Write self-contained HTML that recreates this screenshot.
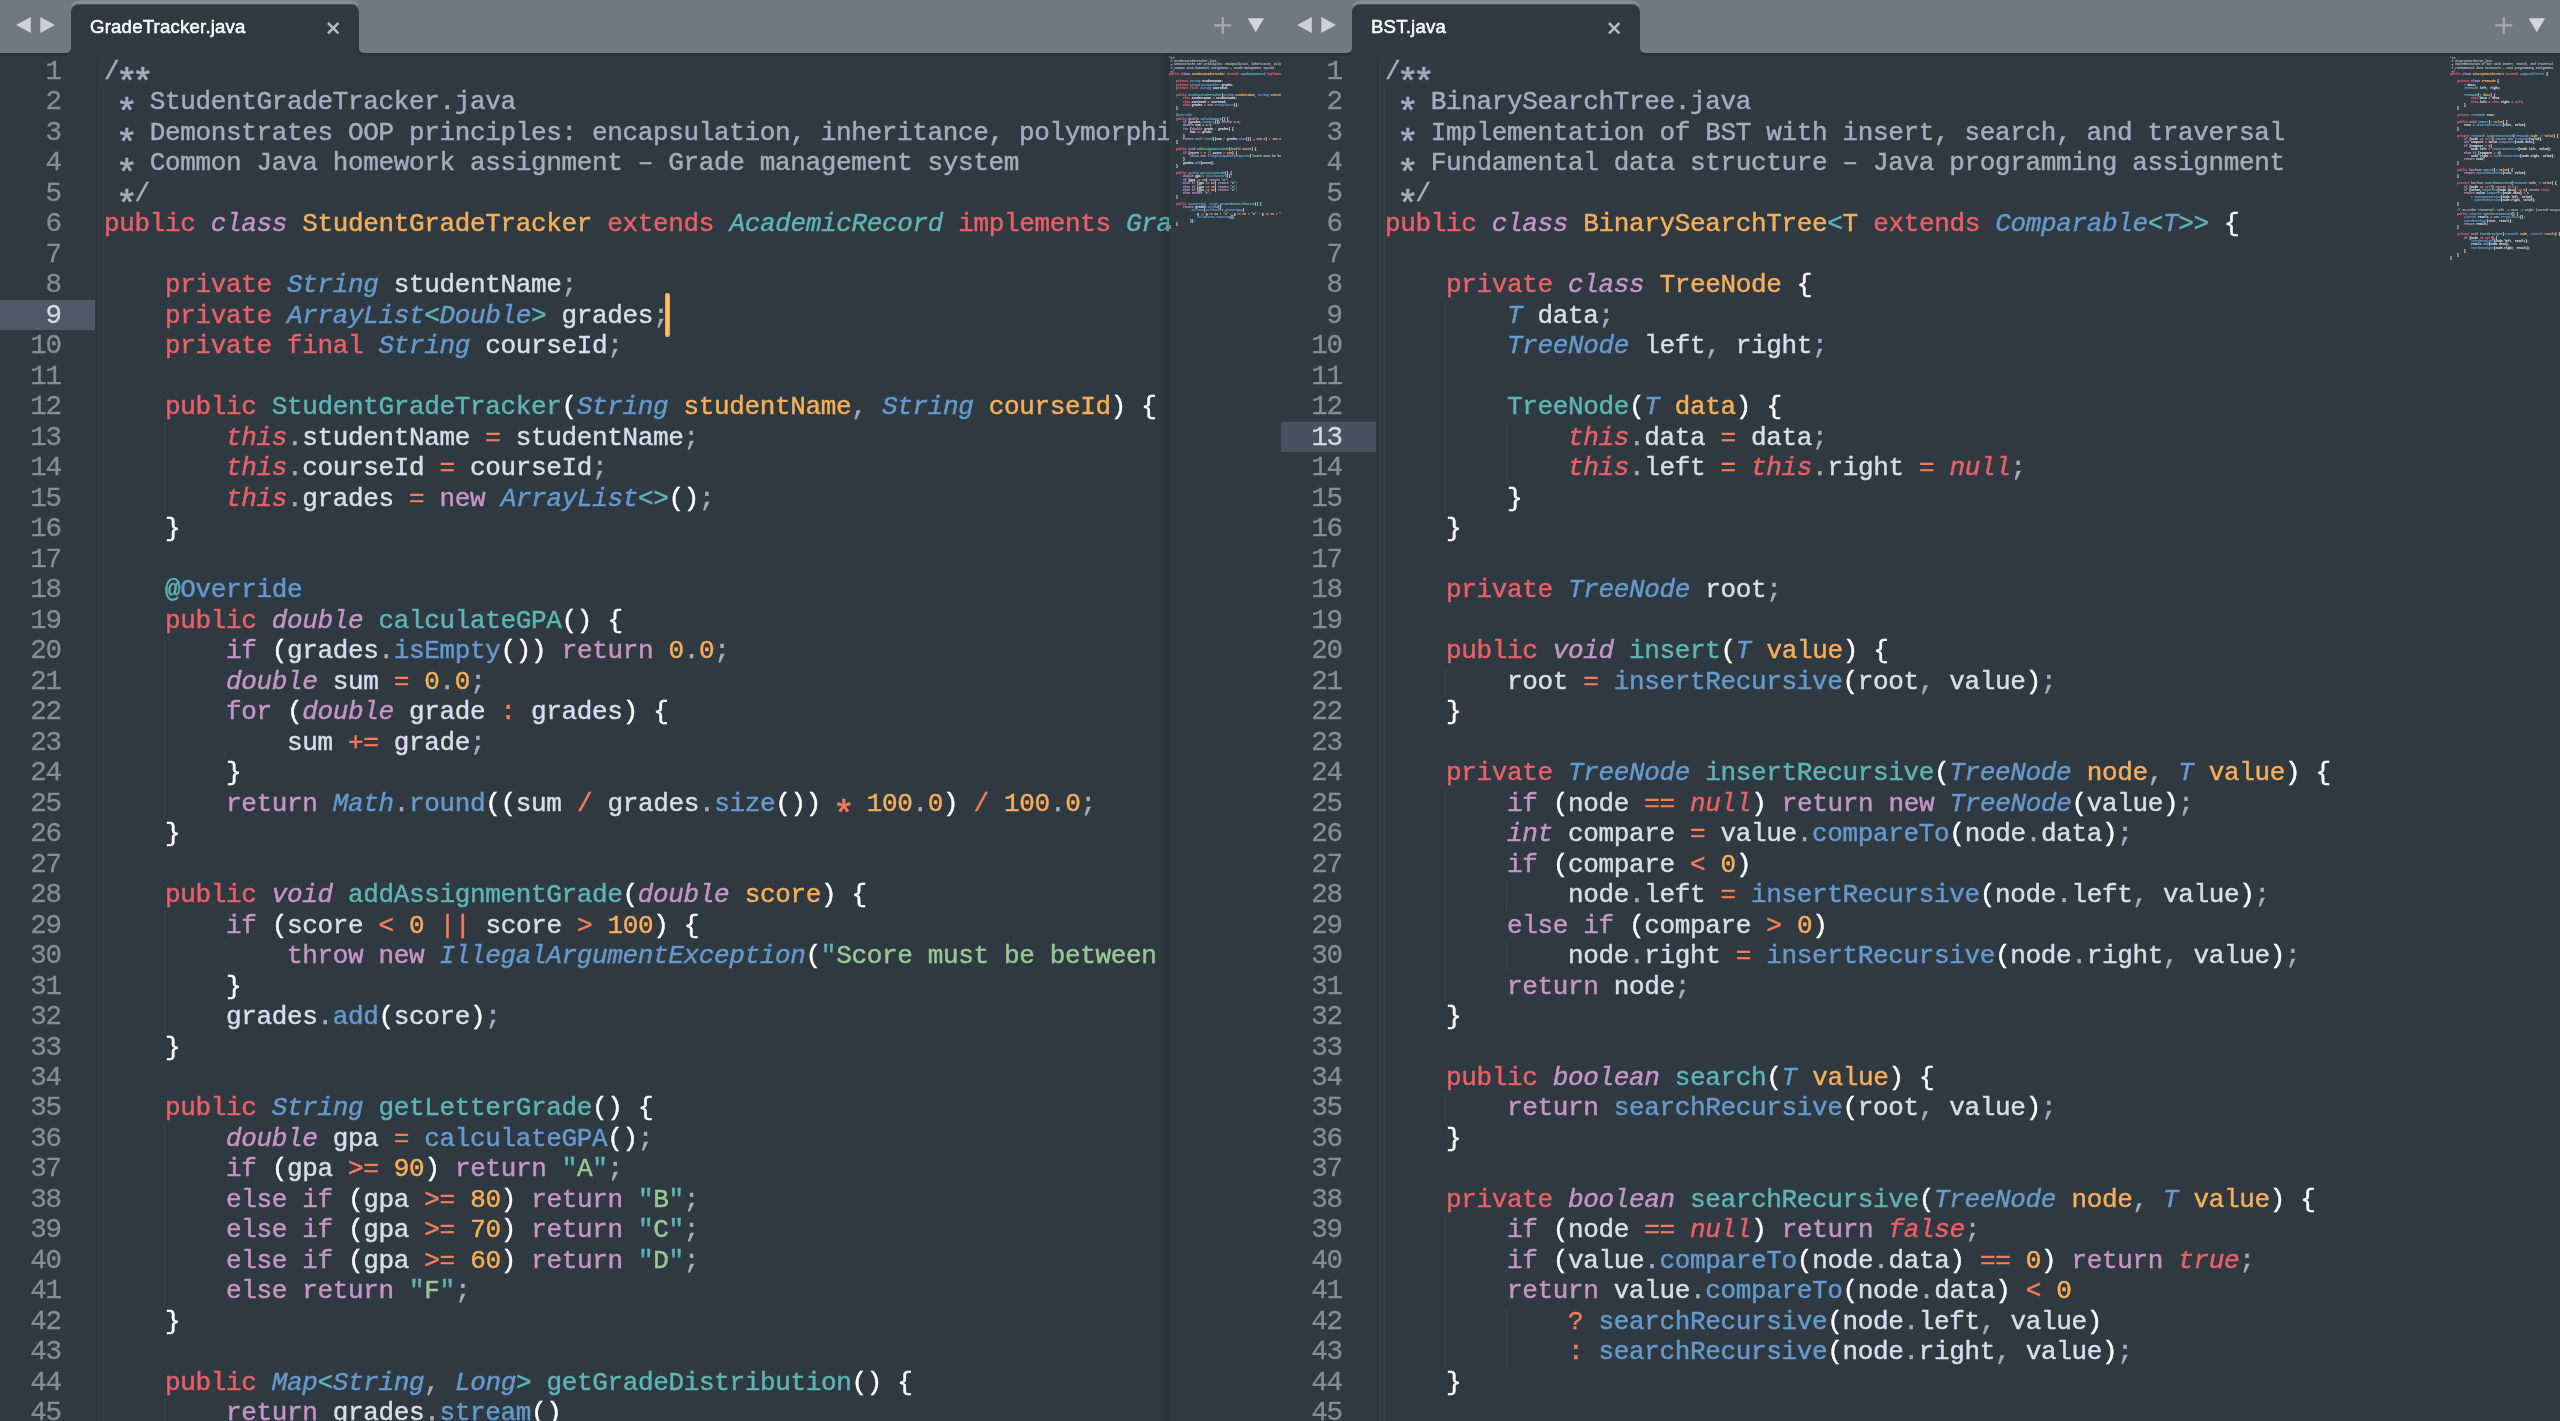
<!DOCTYPE html>
<html><head><meta charset="utf-8"><title>Sublime</title><style>
html,body{margin:0;padding:0}
body{width:2560px;height:1421px;overflow:hidden;position:relative;background:#2f3942;font-family:"Liberation Sans",sans-serif}
.pane{position:absolute;top:0;height:1421px;width:1281px;overflow:hidden;background:#2f3942}
.code,.gut,.title,.mm{will-change:transform}
.bar{position:absolute;left:0;top:0;width:100%;height:52.6px;background:#707880}
.barline{position:absolute;left:0;top:52.6px;width:100%;height:3px;background:linear-gradient(rgba(24,30,40,0.38),rgba(24,30,40,0))}
.tab{position:absolute;left:71px;top:3.5px;width:288px;height:53px;background:#2f3942;border-radius:8px 8px 0 0;box-shadow:inset 0 1px 0 #4a545f,0 -3.5px 0 #848c96}
.tab:before,.tab:after{content:"";position:absolute;bottom:3.9px;width:5px;height:5px}
.tab:before{left:-5px;background:radial-gradient(circle at 0 0,rgba(47,57,66,0) 4.5px,#2f3942 5.5px)}
.tab:after{right:-5px;background:radial-gradient(circle at 100% 0,rgba(47,57,66,0) 4.5px,#2f3942 5.5px)}
.title{position:absolute;left:19px;top:11px;font-size:18.6px;letter-spacing:0.2px;line-height:24px;color:#fff;white-space:nowrap;-webkit-text-stroke:0.5px #fff}
.ico{position:absolute;left:0;top:0}
.gut{position:absolute;left:0;top:56.92px;width:60.7px;text-align:right;white-space:pre;font-family:"Liberation Mono",monospace;font-size:27.5px;letter-spacing:-1.2527px;line-height:30.49px;color:#848c96;margin:0;-webkit-text-stroke:0.3px}
.gut b{font-weight:normal;color:#d3d9e1}
.hl{position:absolute;left:0;width:95px;height:30px;background:#4f5a66}
.code{position:absolute;left:103.8px;top:57.32px;margin:0;white-space:pre;font-family:"Liberation Mono",monospace;font-size:26.0px;letter-spacing:-0.3525px;line-height:30.49px;color:#d8dee9;-webkit-text-stroke:0.45px}
.clip{position:absolute;left:0;top:52px;width:1168.7px;height:1369px;overflow:hidden}
i{font-style:normal}
.a{display:inline-block;transform:translateY(10.3px) scale(1.42);transform-origin:50% 38%}
.c,.s{color:#a6acb9}
.k,.ki{color:#ec5f66}
.p,.pi{color:#c695c6}
.o{color:#f9ae58}
.b,.bi{color:#6699cc}
.t,.ti{color:#5fb4b4}
.x{color:#f97b58}
.g{color:#99c794}
.w{color:#ffffff}
.ki,.pi,.bi,.ti{font-style:italic}
.guide{position:absolute;width:1.5px;background:rgba(216,222,233,0.05)}
.guide.g0{background:rgba(216,222,233,0.06)}
.mm{position:absolute;left:1168.6px;top:55.6px;transform-origin:0 0;transform:scale(0.1148,0.1115);margin:0;white-space:pre;font-family:"Liberation Mono",monospace;font-size:26.0px;letter-spacing:-0.3525px;line-height:30.49px;color:#d8dee9;font-weight:bold;-webkit-text-stroke:1.2px;opacity:0.88}
.mmshadow{position:absolute;left:1160px;top:52px;width:10px;height:1369px;background:linear-gradient(90deg,rgba(0,0,0,0),rgba(0,0,0,0.10) 75%,rgba(0,0,0,0.03))}
.caret{position:absolute;left:665.2px;top:292.8px;width:4.6px;height:44.4px;background:linear-gradient(90deg,#e9993f,#fdc27c 40%,#fdc27c 60%,#e9993f);border-radius:2.3px}
</style></head><body>
<div class="pane" style="left:0px">
<div class="hl" style="top:300.02px;background:#4f5965"></div>
<pre class="gut">1
2
3
4
5
6
7
8
<b>9</b>
10
11
12
13
14
15
16
17
18
19
20
21
22
23
24
25
26
27
28
29
30
31
32
33
34
35
36
37
38
39
40
41
42
43
44
45
46</pre>
<div class="clip" style="top:0;height:1421px"><div class="guide g0" style="left:102.8px;width:1.6px;top:87.59px;height:1400px"></div><div style="position:absolute;left:96.2px;width:1px;top:52px;height:1400px;background:rgba(0,0,0,0.08)"></div><div class="guide" style="left:163.90px;top:422.98px;height:91.47px"></div><div class="guide" style="left:163.90px;top:636.41px;height:182.94px"></div><div class="guide" style="left:163.90px;top:910.82px;height:121.96px"></div><div class="guide" style="left:163.90px;top:1124.25px;height:182.94px"></div><div class="guide" style="left:163.90px;top:1398.66px;height:60.98px"></div><div class="guide" style="left:224.90px;top:727.88px;height:30.49px"></div><div class="guide" style="left:224.90px;top:941.31px;height:30.49px"></div><div class="guide" style="left:224.90px;top:1429.15px;height:30.49px"></div><pre class="code" style="top:57.32px"><i class="c">/<i class="a">*</i><i class="a">*</i></i>
<i class="c"> <i class="a">*</i> StudentGradeTracker.java</i>
<i class="c"> <i class="a">*</i> Demonstrates OOP principles: encapsulation, inheritance, polymorphism</i>
<i class="c"> <i class="a">*</i> Common Java homework assignment – Grade management system</i>
<i class="c"> <i class="a">*</i>/</i>
<i class="k">public</i> <i class="pi">class</i> <i class="o">StudentGradeTracker</i> <i class="k">extends</i> <i class="ti">AcademicRecord</i> <i class="k">implements</i> <i class="ti">GradeCalculator</i> <i class="w">{</i>

    <i class="k">private</i> <i class="bi">String</i> studentName<i class="s">;</i>
    <i class="k">private</i> <i class="bi">ArrayList</i><i class="t">&lt;</i><i class="bi">Double</i><i class="t">&gt;</i> grades<i class="s">;</i>
    <i class="k">private</i> <i class="k">final</i> <i class="bi">String</i> courseId<i class="s">;</i>

    <i class="k">public</i> <i class="t">StudentGradeTracker</i><i class="w">(</i><i class="bi">String</i> <i class="o">studentName</i><i class="s">,</i> <i class="bi">String</i> <i class="o">courseId</i><i class="w">)</i> <i class="w">{</i>
        <i class="ki">this</i><i class="s">.</i>studentName <i class="x">=</i> studentName<i class="s">;</i>
        <i class="ki">this</i><i class="s">.</i>courseId <i class="x">=</i> courseId<i class="s">;</i>
        <i class="ki">this</i><i class="s">.</i>grades <i class="x">=</i> <i class="p">new</i> <i class="bi">ArrayList</i><i class="t">&lt;&gt;</i><i class="w">()</i><i class="s">;</i>
    <i class="w">}</i>

    <i class="t">@</i><i class="b">Override</i>
    <i class="k">public</i> <i class="pi">double</i> <i class="t">calculateGPA</i><i class="w">()</i> <i class="w">{</i>
        <i class="p">if</i> <i class="w">(</i>grades<i class="s">.</i><i class="b">isEmpty</i><i class="w">())</i> <i class="p">return</i> <i class="o">0</i><i class="s">.</i><i class="o">0</i><i class="s">;</i>
        <i class="pi">double</i> sum <i class="x">=</i> <i class="o">0</i><i class="s">.</i><i class="o">0</i><i class="s">;</i>
        <i class="p">for</i> <i class="w">(</i><i class="pi">double</i> grade <i class="x">:</i> grades<i class="w">)</i> <i class="w">{</i>
            sum <i class="x">+=</i> grade<i class="s">;</i>
        <i class="w">}</i>
        <i class="p">return</i> <i class="bi">Math</i><i class="s">.</i><i class="b">round</i><i class="w">((</i>sum <i class="x">/</i> grades<i class="s">.</i><i class="b">size</i><i class="w">())</i> <i class="x"><i class="a">*</i></i> <i class="o">100</i><i class="s">.</i><i class="o">0</i><i class="w">)</i> <i class="x">/</i> <i class="o">100</i><i class="s">.</i><i class="o">0</i><i class="s">;</i>
    <i class="w">}</i>

    <i class="k">public</i> <i class="pi">void</i> <i class="t">addAssignmentGrade</i><i class="w">(</i><i class="pi">double</i> <i class="o">score</i><i class="w">)</i> <i class="w">{</i>
        <i class="p">if</i> <i class="w">(</i>score <i class="x">&lt;</i> <i class="o">0</i> <i class="x">||</i> score <i class="x">&gt;</i> <i class="o">100</i><i class="w">)</i> <i class="w">{</i>
            <i class="p">throw</i> <i class="p">new</i> <i class="bi">IllegalArgumentException</i><i class="w">(</i><i class="t">"</i><i class="g">Score must be between 0 and 100</i><i class="t">"</i><i class="w">)</i><i class="s">;</i>
        <i class="w">}</i>
        grades<i class="s">.</i><i class="b">add</i><i class="w">(</i>score<i class="w">)</i><i class="s">;</i>
    <i class="w">}</i>

    <i class="k">public</i> <i class="bi">String</i> <i class="t">getLetterGrade</i><i class="w">()</i> <i class="w">{</i>
        <i class="pi">double</i> gpa <i class="x">=</i> <i class="b">calculateGPA</i><i class="w">()</i><i class="s">;</i>
        <i class="p">if</i> <i class="w">(</i>gpa <i class="x">&gt;=</i> <i class="o">90</i><i class="w">)</i> <i class="p">return</i> <i class="t">"</i><i class="g">A</i><i class="t">"</i><i class="s">;</i>
        <i class="p">else</i> <i class="p">if</i> <i class="w">(</i>gpa <i class="x">&gt;=</i> <i class="o">80</i><i class="w">)</i> <i class="p">return</i> <i class="t">"</i><i class="g">B</i><i class="t">"</i><i class="s">;</i>
        <i class="p">else</i> <i class="p">if</i> <i class="w">(</i>gpa <i class="x">&gt;=</i> <i class="o">70</i><i class="w">)</i> <i class="p">return</i> <i class="t">"</i><i class="g">C</i><i class="t">"</i><i class="s">;</i>
        <i class="p">else</i> <i class="p">if</i> <i class="w">(</i>gpa <i class="x">&gt;=</i> <i class="o">60</i><i class="w">)</i> <i class="p">return</i> <i class="t">"</i><i class="g">D</i><i class="t">"</i><i class="s">;</i>
        <i class="p">else</i> <i class="p">return</i> <i class="t">"</i><i class="g">F</i><i class="t">"</i><i class="s">;</i>
    <i class="w">}</i>

    <i class="k">public</i> <i class="bi">Map</i><i class="t">&lt;</i><i class="bi">String</i><i class="s">,</i> <i class="bi">Long</i><i class="t">&gt;</i> <i class="t">getGradeDistribution</i><i class="w">()</i> <i class="w">{</i>
        <i class="p">return</i> grades<i class="s">.</i><i class="b">stream</i><i class="w">()</i>
            <i class="s">.</i><i class="b">collect</i><i class="w">(</i><i class="bi">Collectors</i><i class="s">.</i><i class="b">groupingBy</i><i class="w">(</i></pre></div>
<div class="mmshadow"></div>
<pre class="mm"><i class="c">/<i class="a">*</i><i class="a">*</i></i>
<i class="c"> <i class="a">*</i> StudentGradeTracker.java</i>
<i class="c"> <i class="a">*</i> Demonstrates OOP principles: encapsulation, inheritance, polymorphism</i>
<i class="c"> <i class="a">*</i> Common Java homework assignment – Grade management system</i>
<i class="c"> <i class="a">*</i>/</i>
<i class="k">public</i> <i class="pi">class</i> <i class="o">StudentGradeTracker</i> <i class="k">extends</i> <i class="ti">AcademicRecord</i> <i class="k">implements</i> <i class="ti">GradeCalculator</i> <i class="w">{</i>

    <i class="k">private</i> <i class="bi">String</i> studentName<i class="s">;</i>
    <i class="k">private</i> <i class="bi">ArrayList</i><i class="t">&lt;</i><i class="bi">Double</i><i class="t">&gt;</i> grades<i class="s">;</i>
    <i class="k">private</i> <i class="k">final</i> <i class="bi">String</i> courseId<i class="s">;</i>

    <i class="k">public</i> <i class="t">StudentGradeTracker</i><i class="w">(</i><i class="bi">String</i> <i class="o">studentName</i><i class="s">,</i> <i class="bi">String</i> <i class="o">courseId</i><i class="w">)</i> <i class="w">{</i>
        <i class="ki">this</i><i class="s">.</i>studentName <i class="x">=</i> studentName<i class="s">;</i>
        <i class="ki">this</i><i class="s">.</i>courseId <i class="x">=</i> courseId<i class="s">;</i>
        <i class="ki">this</i><i class="s">.</i>grades <i class="x">=</i> <i class="p">new</i> <i class="bi">ArrayList</i><i class="t">&lt;&gt;</i><i class="w">()</i><i class="s">;</i>
    <i class="w">}</i>

    <i class="t">@</i><i class="b">Override</i>
    <i class="k">public</i> <i class="pi">double</i> <i class="t">calculateGPA</i><i class="w">()</i> <i class="w">{</i>
        <i class="p">if</i> <i class="w">(</i>grades<i class="s">.</i><i class="b">isEmpty</i><i class="w">())</i> <i class="p">return</i> <i class="o">0</i><i class="s">.</i><i class="o">0</i><i class="s">;</i>
        <i class="pi">double</i> sum <i class="x">=</i> <i class="o">0</i><i class="s">.</i><i class="o">0</i><i class="s">;</i>
        <i class="p">for</i> <i class="w">(</i><i class="pi">double</i> grade <i class="x">:</i> grades<i class="w">)</i> <i class="w">{</i>
            sum <i class="x">+=</i> grade<i class="s">;</i>
        <i class="w">}</i>
        <i class="p">return</i> <i class="bi">Math</i><i class="s">.</i><i class="b">round</i><i class="w">((</i>sum <i class="x">/</i> grades<i class="s">.</i><i class="b">size</i><i class="w">())</i> <i class="x"><i class="a">*</i></i> <i class="o">100</i><i class="s">.</i><i class="o">0</i><i class="w">)</i> <i class="x">/</i> <i class="o">100</i><i class="s">.</i><i class="o">0</i><i class="s">;</i>
    <i class="w">}</i>

    <i class="k">public</i> <i class="pi">void</i> <i class="t">addAssignmentGrade</i><i class="w">(</i><i class="pi">double</i> <i class="o">score</i><i class="w">)</i> <i class="w">{</i>
        <i class="p">if</i> <i class="w">(</i>score <i class="x">&lt;</i> <i class="o">0</i> <i class="x">||</i> score <i class="x">&gt;</i> <i class="o">100</i><i class="w">)</i> <i class="w">{</i>
            <i class="p">throw</i> <i class="p">new</i> <i class="bi">IllegalArgumentException</i><i class="w">(</i><i class="t">"</i><i class="g">Score must be between 0 and 100</i><i class="t">"</i><i class="w">)</i><i class="s">;</i>
        <i class="w">}</i>
        grades<i class="s">.</i><i class="b">add</i><i class="w">(</i>score<i class="w">)</i><i class="s">;</i>
    <i class="w">}</i>

    <i class="k">public</i> <i class="bi">String</i> <i class="t">getLetterGrade</i><i class="w">()</i> <i class="w">{</i>
        <i class="pi">double</i> gpa <i class="x">=</i> <i class="b">calculateGPA</i><i class="w">()</i><i class="s">;</i>
        <i class="p">if</i> <i class="w">(</i>gpa <i class="x">&gt;=</i> <i class="o">90</i><i class="w">)</i> <i class="p">return</i> <i class="t">"</i><i class="g">A</i><i class="t">"</i><i class="s">;</i>
        <i class="p">else</i> <i class="p">if</i> <i class="w">(</i>gpa <i class="x">&gt;=</i> <i class="o">80</i><i class="w">)</i> <i class="p">return</i> <i class="t">"</i><i class="g">B</i><i class="t">"</i><i class="s">;</i>
        <i class="p">else</i> <i class="p">if</i> <i class="w">(</i>gpa <i class="x">&gt;=</i> <i class="o">70</i><i class="w">)</i> <i class="p">return</i> <i class="t">"</i><i class="g">C</i><i class="t">"</i><i class="s">;</i>
        <i class="p">else</i> <i class="p">if</i> <i class="w">(</i>gpa <i class="x">&gt;=</i> <i class="o">60</i><i class="w">)</i> <i class="p">return</i> <i class="t">"</i><i class="g">D</i><i class="t">"</i><i class="s">;</i>
        <i class="p">else</i> <i class="p">return</i> <i class="t">"</i><i class="g">F</i><i class="t">"</i><i class="s">;</i>
    <i class="w">}</i>

    <i class="k">public</i> <i class="bi">Map</i><i class="t">&lt;</i><i class="bi">String</i><i class="s">,</i> <i class="bi">Long</i><i class="t">&gt;</i> <i class="t">getGradeDistribution</i><i class="w">()</i> <i class="w">{</i>
        <i class="p">return</i> grades<i class="s">.</i><i class="b">stream</i><i class="w">()</i>
            <i class="s">.</i><i class="b">collect</i><i class="w">(</i><i class="bi">Collectors</i><i class="s">.</i><i class="b">groupingBy</i><i class="w">(</i>
                g <i class="x">-&gt;</i> g <i class="x">&gt;=</i> <i class="o">90</i> <i class="x">?</i> <i class="t">"</i><i class="g">A</i><i class="t">"</i> <i class="x">:</i> g <i class="x">&gt;=</i> <i class="o">80</i> <i class="x">?</i> <i class="t">"</i><i class="g">B</i><i class="t">"</i> <i class="x">:</i> g <i class="x">&gt;=</i> <i class="o">70</i> <i class="x">?</i> <i class="t">"</i><i class="g">C</i><i class="t">"</i> <i class="x">:</i> g <i class="x">&gt;=</i> <i class="o">60</i> <i class="x">?</i> <i class="t">"</i><i class="g">D</i><i class="t">"</i> <i class="x">:</i> <i class="t">"</i><i class="g">F</i><i class="t">"</i><i class="s">,</i>
                <i class="bi">Collectors</i><i class="s">.</i><i class="b">counting</i><i class="w">()</i>
            <i class="w">))</i><i class="s">;</i>
    <i class="w">}</i>
<i class="w">}</i></pre>
<div class="caret"></div>
<div class="bar"></div><div class="barline"></div>
<div class="tab"><div class="title">GradeTracker.java</div></div>
<svg class="ico" width="1281" height="52" viewBox="0 0 1281 52">
<path d="M30.8 17 L30.8 33 L16.2 25 Z" fill="#cdd0d5"/>
<path d="M40.3 17 L40.3 33 L54.9 25 Z" fill="#cdd0d5"/>
<path d="M328 23 L338.4 33.4 M338.4 23 L328 33.4" stroke="#b3b9c0" stroke-width="2.5" fill="none"/>
<path d="M1214.3 25.4 H1231.3 M1222.8 16.9 V33.9" stroke="#a3aab2" stroke-width="2.2" fill="none"/>
<path d="M1247.6 18.2 H1264 L1255.8 32.2 Z" fill="#d3d6da"/>
</svg>
</div><div class="pane" style="left:1281px">
<div class="hl" style="top:421.98px;background:#48525e"></div>
<pre class="gut">1
2
3
4
5
6
7
8
9
10
11
12
<b>13</b>
14
15
16
17
18
19
20
21
22
23
24
25
26
27
28
29
30
31
32
33
34
35
36
37
38
39
40
41
42
43
44
45
46</pre>
<div class="guide g0" style="left:102.8px;width:1.6px;top:87.59px;height:1400px"></div><div style="position:absolute;left:96.2px;width:1px;top:52px;height:1400px;background:rgba(0,0,0,0.08)"></div><div class="guide" style="left:163.90px;top:301.02px;height:213.43px"></div><div class="guide" style="left:163.90px;top:666.90px;height:30.49px"></div><div class="guide" style="left:163.90px;top:788.86px;height:213.43px"></div><div class="guide" style="left:163.90px;top:1093.76px;height:30.49px"></div><div class="guide" style="left:163.90px;top:1215.72px;height:152.45px"></div><div class="guide" style="left:224.90px;top:422.98px;height:60.98px"></div><div class="guide" style="left:224.90px;top:880.33px;height:30.49px"></div><div class="guide" style="left:224.90px;top:941.31px;height:30.49px"></div><div class="guide" style="left:224.90px;top:1307.19px;height:60.98px"></div><pre class="code"><i class="c">/<i class="a">*</i><i class="a">*</i></i>
<i class="c"> <i class="a">*</i> BinarySearchTree.java</i>
<i class="c"> <i class="a">*</i> Implementation of BST with insert, search, and traversal</i>
<i class="c"> <i class="a">*</i> Fundamental data structure – Java programming assignment</i>
<i class="c"> <i class="a">*</i>/</i>
<i class="k">public</i> <i class="pi">class</i> <i class="o">BinarySearchTree</i><i class="t">&lt;</i><i class="o">T</i> <i class="k">extends</i> <i class="bi">Comparable</i><i class="t">&lt;</i><i class="bi">T</i><i class="t">&gt;&gt;</i> <i class="w">{</i>

    <i class="k">private</i> <i class="pi">class</i> <i class="o">TreeNode</i> <i class="w">{</i>
        <i class="bi">T</i> data<i class="s">;</i>
        <i class="bi">TreeNode</i> left<i class="s">,</i> right<i class="s">;</i>

        <i class="t">TreeNode</i><i class="w">(</i><i class="bi">T</i> <i class="o">data</i><i class="w">)</i> <i class="w">{</i>
            <i class="ki">this</i><i class="s">.</i>data <i class="x">=</i> data<i class="s">;</i>
            <i class="ki">this</i><i class="s">.</i>left <i class="x">=</i> <i class="ki">this</i><i class="s">.</i>right <i class="x">=</i> <i class="ki">null</i><i class="s">;</i>
        <i class="w">}</i>
    <i class="w">}</i>

    <i class="k">private</i> <i class="bi">TreeNode</i> root<i class="s">;</i>

    <i class="k">public</i> <i class="pi">void</i> <i class="t">insert</i><i class="w">(</i><i class="bi">T</i> <i class="o">value</i><i class="w">)</i> <i class="w">{</i>
        root <i class="x">=</i> <i class="b">insertRecursive</i><i class="w">(</i>root<i class="s">,</i> value<i class="w">)</i><i class="s">;</i>
    <i class="w">}</i>

    <i class="k">private</i> <i class="bi">TreeNode</i> <i class="t">insertRecursive</i><i class="w">(</i><i class="bi">TreeNode</i> <i class="o">node</i><i class="s">,</i> <i class="bi">T</i> <i class="o">value</i><i class="w">)</i> <i class="w">{</i>
        <i class="p">if</i> <i class="w">(</i>node <i class="x">==</i> <i class="ki">null</i><i class="w">)</i> <i class="p">return</i> <i class="p">new</i> <i class="bi">TreeNode</i><i class="w">(</i>value<i class="w">)</i><i class="s">;</i>
        <i class="pi">int</i> compare <i class="x">=</i> value<i class="s">.</i><i class="b">compareTo</i><i class="w">(</i>node<i class="s">.</i>data<i class="w">)</i><i class="s">;</i>
        <i class="p">if</i> <i class="w">(</i>compare <i class="x">&lt;</i> <i class="o">0</i><i class="w">)</i>
            node<i class="s">.</i>left <i class="x">=</i> <i class="b">insertRecursive</i><i class="w">(</i>node<i class="s">.</i>left<i class="s">,</i> value<i class="w">)</i><i class="s">;</i>
        <i class="p">else</i> <i class="p">if</i> <i class="w">(</i>compare <i class="x">&gt;</i> <i class="o">0</i><i class="w">)</i>
            node<i class="s">.</i>right <i class="x">=</i> <i class="b">insertRecursive</i><i class="w">(</i>node<i class="s">.</i>right<i class="s">,</i> value<i class="w">)</i><i class="s">;</i>
        <i class="p">return</i> node<i class="s">;</i>
    <i class="w">}</i>

    <i class="k">public</i> <i class="pi">boolean</i> <i class="t">search</i><i class="w">(</i><i class="bi">T</i> <i class="o">value</i><i class="w">)</i> <i class="w">{</i>
        <i class="p">return</i> <i class="b">searchRecursive</i><i class="w">(</i>root<i class="s">,</i> value<i class="w">)</i><i class="s">;</i>
    <i class="w">}</i>

    <i class="k">private</i> <i class="pi">boolean</i> <i class="t">searchRecursive</i><i class="w">(</i><i class="bi">TreeNode</i> <i class="o">node</i><i class="s">,</i> <i class="bi">T</i> <i class="o">value</i><i class="w">)</i> <i class="w">{</i>
        <i class="p">if</i> <i class="w">(</i>node <i class="x">==</i> <i class="ki">null</i><i class="w">)</i> <i class="p">return</i> <i class="ki">false</i><i class="s">;</i>
        <i class="p">if</i> <i class="w">(</i>value<i class="s">.</i><i class="b">compareTo</i><i class="w">(</i>node<i class="s">.</i>data<i class="w">)</i> <i class="x">==</i> <i class="o">0</i><i class="w">)</i> <i class="p">return</i> <i class="ki">true</i><i class="s">;</i>
        <i class="p">return</i> value<i class="s">.</i><i class="b">compareTo</i><i class="w">(</i>node<i class="s">.</i>data<i class="w">)</i> <i class="x">&lt;</i> <i class="o">0</i>
            <i class="x">?</i> <i class="b">searchRecursive</i><i class="w">(</i>node<i class="s">.</i>left<i class="s">,</i> value<i class="w">)</i>
            <i class="x">:</i> <i class="b">searchRecursive</i><i class="w">(</i>node<i class="s">.</i>right<i class="s">,</i> value<i class="w">)</i><i class="s">;</i>
    <i class="w">}</i>

<i class="c">    // In-order traversal: Left -&gt; Root -&gt; Right (sorted output)</i></pre>
<pre class="mm"><i class="c">/<i class="a">*</i><i class="a">*</i></i>
<i class="c"> <i class="a">*</i> BinarySearchTree.java</i>
<i class="c"> <i class="a">*</i> Implementation of BST with insert, search, and traversal</i>
<i class="c"> <i class="a">*</i> Fundamental data structure – Java programming assignment</i>
<i class="c"> <i class="a">*</i>/</i>
<i class="k">public</i> <i class="pi">class</i> <i class="o">BinarySearchTree</i><i class="t">&lt;</i><i class="o">T</i> <i class="k">extends</i> <i class="bi">Comparable</i><i class="t">&lt;</i><i class="bi">T</i><i class="t">&gt;&gt;</i> <i class="w">{</i>

    <i class="k">private</i> <i class="pi">class</i> <i class="o">TreeNode</i> <i class="w">{</i>
        <i class="bi">T</i> data<i class="s">;</i>
        <i class="bi">TreeNode</i> left<i class="s">,</i> right<i class="s">;</i>

        <i class="t">TreeNode</i><i class="w">(</i><i class="bi">T</i> <i class="o">data</i><i class="w">)</i> <i class="w">{</i>
            <i class="ki">this</i><i class="s">.</i>data <i class="x">=</i> data<i class="s">;</i>
            <i class="ki">this</i><i class="s">.</i>left <i class="x">=</i> <i class="ki">this</i><i class="s">.</i>right <i class="x">=</i> <i class="ki">null</i><i class="s">;</i>
        <i class="w">}</i>
    <i class="w">}</i>

    <i class="k">private</i> <i class="bi">TreeNode</i> root<i class="s">;</i>

    <i class="k">public</i> <i class="pi">void</i> <i class="t">insert</i><i class="w">(</i><i class="bi">T</i> <i class="o">value</i><i class="w">)</i> <i class="w">{</i>
        root <i class="x">=</i> <i class="b">insertRecursive</i><i class="w">(</i>root<i class="s">,</i> value<i class="w">)</i><i class="s">;</i>
    <i class="w">}</i>

    <i class="k">private</i> <i class="bi">TreeNode</i> <i class="t">insertRecursive</i><i class="w">(</i><i class="bi">TreeNode</i> <i class="o">node</i><i class="s">,</i> <i class="bi">T</i> <i class="o">value</i><i class="w">)</i> <i class="w">{</i>
        <i class="p">if</i> <i class="w">(</i>node <i class="x">==</i> <i class="ki">null</i><i class="w">)</i> <i class="p">return</i> <i class="p">new</i> <i class="bi">TreeNode</i><i class="w">(</i>value<i class="w">)</i><i class="s">;</i>
        <i class="pi">int</i> compare <i class="x">=</i> value<i class="s">.</i><i class="b">compareTo</i><i class="w">(</i>node<i class="s">.</i>data<i class="w">)</i><i class="s">;</i>
        <i class="p">if</i> <i class="w">(</i>compare <i class="x">&lt;</i> <i class="o">0</i><i class="w">)</i>
            node<i class="s">.</i>left <i class="x">=</i> <i class="b">insertRecursive</i><i class="w">(</i>node<i class="s">.</i>left<i class="s">,</i> value<i class="w">)</i><i class="s">;</i>
        <i class="p">else</i> <i class="p">if</i> <i class="w">(</i>compare <i class="x">&gt;</i> <i class="o">0</i><i class="w">)</i>
            node<i class="s">.</i>right <i class="x">=</i> <i class="b">insertRecursive</i><i class="w">(</i>node<i class="s">.</i>right<i class="s">,</i> value<i class="w">)</i><i class="s">;</i>
        <i class="p">return</i> node<i class="s">;</i>
    <i class="w">}</i>

    <i class="k">public</i> <i class="pi">boolean</i> <i class="t">search</i><i class="w">(</i><i class="bi">T</i> <i class="o">value</i><i class="w">)</i> <i class="w">{</i>
        <i class="p">return</i> <i class="b">searchRecursive</i><i class="w">(</i>root<i class="s">,</i> value<i class="w">)</i><i class="s">;</i>
    <i class="w">}</i>

    <i class="k">private</i> <i class="pi">boolean</i> <i class="t">searchRecursive</i><i class="w">(</i><i class="bi">TreeNode</i> <i class="o">node</i><i class="s">,</i> <i class="bi">T</i> <i class="o">value</i><i class="w">)</i> <i class="w">{</i>
        <i class="p">if</i> <i class="w">(</i>node <i class="x">==</i> <i class="ki">null</i><i class="w">)</i> <i class="p">return</i> <i class="ki">false</i><i class="s">;</i>
        <i class="p">if</i> <i class="w">(</i>value<i class="s">.</i><i class="b">compareTo</i><i class="w">(</i>node<i class="s">.</i>data<i class="w">)</i> <i class="x">==</i> <i class="o">0</i><i class="w">)</i> <i class="p">return</i> <i class="ki">true</i><i class="s">;</i>
        <i class="p">return</i> value<i class="s">.</i><i class="b">compareTo</i><i class="w">(</i>node<i class="s">.</i>data<i class="w">)</i> <i class="x">&lt;</i> <i class="o">0</i>
            <i class="x">?</i> <i class="b">searchRecursive</i><i class="w">(</i>node<i class="s">.</i>left<i class="s">,</i> value<i class="w">)</i>
            <i class="x">:</i> <i class="b">searchRecursive</i><i class="w">(</i>node<i class="s">.</i>right<i class="s">,</i> value<i class="w">)</i><i class="s">;</i>
    <i class="w">}</i>

<i class="c">    // In-order traversal: Left -&gt; Root -&gt; Right (sorted output)</i>
    <i class="k">public</i> <i class="bi">List</i><i class="t">&lt;</i><i class="bi">T</i><i class="t">&gt;</i> <i class="t">inorderTraversal</i><i class="w">()</i> <i class="w">{</i>
        <i class="bi">List</i><i class="t">&lt;</i><i class="bi">T</i><i class="t">&gt;</i> result <i class="x">=</i> <i class="p">new</i> <i class="bi">ArrayList</i><i class="t">&lt;&gt;</i><i class="w">()</i><i class="s">;</i>
        <i class="b">inorderHelper</i><i class="w">(</i>root<i class="s">,</i> result<i class="w">)</i><i class="s">;</i>
        <i class="p">return</i> result<i class="s">;</i>
    <i class="w">}</i>

    <i class="k">private</i> <i class="pi">void</i> <i class="t">inorderHelper</i><i class="w">(</i><i class="bi">TreeNode</i> <i class="o">node</i><i class="s">,</i> <i class="bi">List</i><i class="t">&lt;</i><i class="bi">T</i><i class="t">&gt;</i> <i class="o">result</i><i class="w">)</i> <i class="w">{</i>
        <i class="p">if</i> <i class="w">(</i>node <i class="x">!=</i> <i class="ki">null</i><i class="w">)</i> <i class="w">{</i>
            <i class="b">inorderHelper</i><i class="w">(</i>node<i class="s">.</i>left<i class="s">,</i> result<i class="w">)</i><i class="s">;</i>
            result<i class="s">.</i><i class="b">add</i><i class="w">(</i>node<i class="s">.</i>data<i class="w">)</i><i class="s">;</i>
            <i class="b">inorderHelper</i><i class="w">(</i>node<i class="s">.</i>right<i class="s">,</i> result<i class="w">)</i><i class="s">;</i>
        <i class="w">}</i>
    <i class="w">}</i>
<i class="w">}</i></pre>
<div class="bar"></div><div class="barline"></div>
<div class="tab"><div class="title">BST.java</div></div>
<svg class="ico" width="1281" height="52" viewBox="0 0 1281 52">
<path d="M30.8 17 L30.8 33 L16.2 25 Z" fill="#cdd0d5"/>
<path d="M40.3 17 L40.3 33 L54.9 25 Z" fill="#cdd0d5"/>
<path d="M328 23 L338.4 33.4 M338.4 23 L328 33.4" stroke="#b3b9c0" stroke-width="2.5" fill="none"/>
<path d="M1214.3 25.4 H1231.3 M1222.8 16.9 V33.9" stroke="#a3aab2" stroke-width="2.2" fill="none"/>
<path d="M1247.6 18.2 H1264 L1255.8 32.2 Z" fill="#d3d6da"/>
</svg>
</div>
</body></html>
